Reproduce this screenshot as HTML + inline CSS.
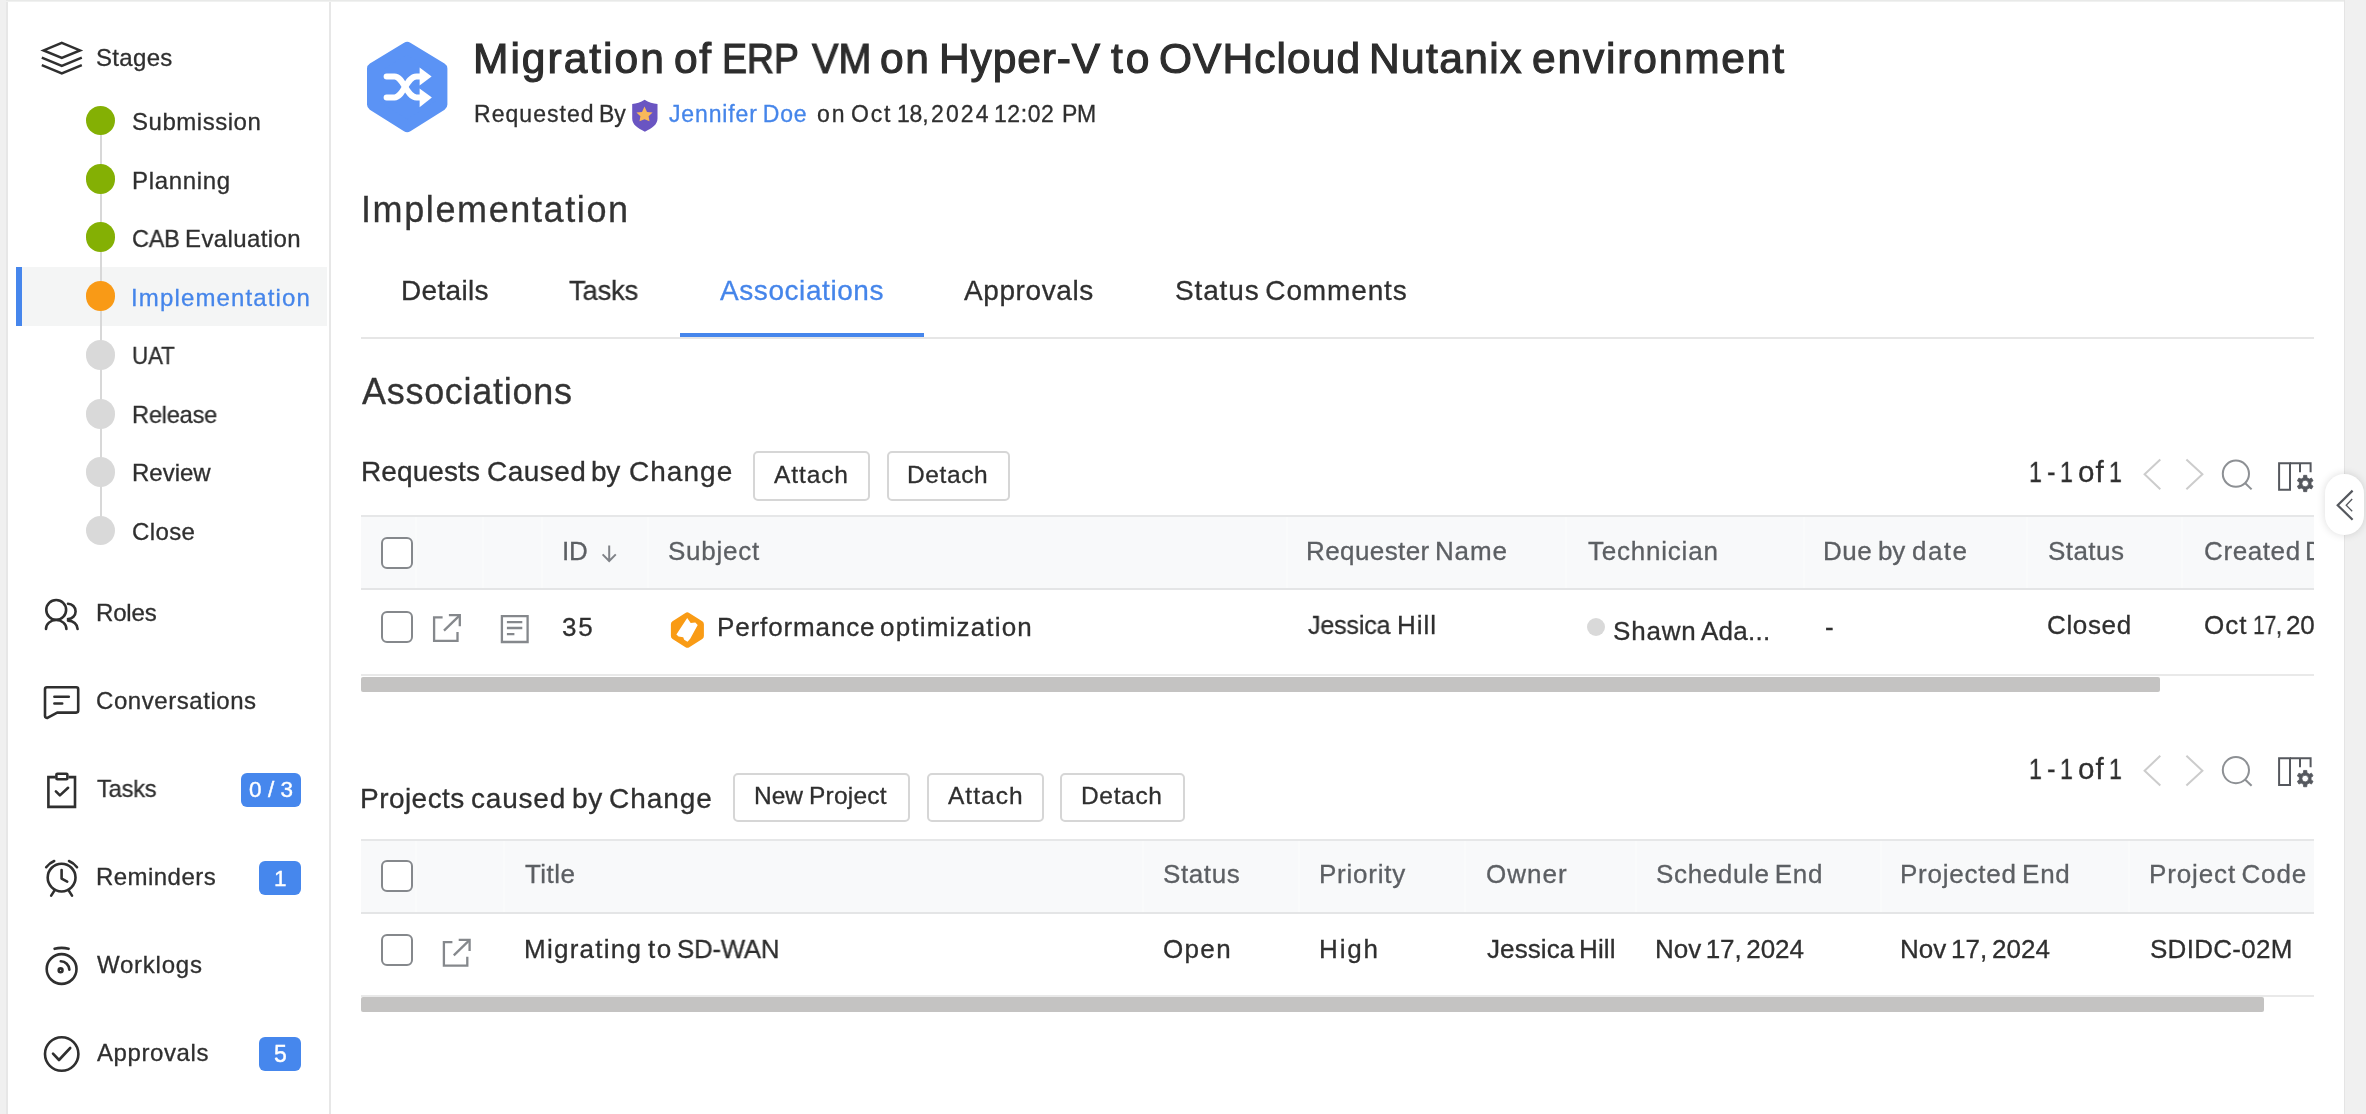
<!DOCTYPE html><html lang="en"><head><meta charset="utf-8"><title>Migration of ERP VM on Hyper-V to OVHcloud Nutanix environment</title>
<style>
*{box-sizing:border-box}
html,body{margin:0;padding:0}
body{width:2366px;height:1114px;position:relative;overflow:hidden;background:#fff;font-family:"Liberation Sans", Arial, Helvetica, sans-serif;color:#2f2f2f}
.t{position:absolute;white-space:pre;line-height:1;display:block;will-change:transform}
.abs,svg.i{position:absolute}
svg.i{overflow:visible;left:0;top:0}
#frame-l{left:0;top:0;width:6px;height:1114px;background:#f0f0f0}
#frame-lb{left:6px;top:0;width:2px;height:1114px;background:#e7e7e7}
#frame-t{left:6px;top:0;width:2338px;height:2px;background:linear-gradient(#e8e9e8 0,#e8e9e8 55%,#fafbfa 100%)}
#frame-r{left:2344px;top:0;width:22px;height:1114px;background:#f0f0f0;border-left:1px solid #e4e4e4}
#side-b{left:329px;top:2px;width:2px;height:1112px;background:#e7e7e7}
#stage-line{left:99.5px;top:120px;width:2px;height:412px;background:#d8d8d8}
#stage-sel{left:16px;top:267px;width:311px;height:59px;background:#f4f5f5;border-left:6px solid #4686ec}
.dot{position:absolute;width:29.8px;height:29.8px;border-radius:50%;left:85.7px}
.g{background:#84b004}.o{background:#f99a16}.n{background:#d9d9d9}
.badge{position:absolute;background:#4687ed;border-radius:6px}
.tabline{left:361px;top:337px;width:1953px;height:2px;background:#e6e6e6}
.tabsel{left:680px;top:333px;width:244px;height:4px;background:#4686ec}
.btn{position:absolute;border:2px solid #d6d6d6;border-radius:5px;background:#fff}
.th{position:absolute;left:361px;width:1953px;background:#f8f9fa;border-top:2px solid #e6e7e8;border-bottom:2px solid #e4e5e6}
.sep{position:absolute;width:2px;background:#fafbfb}
.rowline{position:absolute;left:361px;width:1953px;height:2px;background:#e9e9e9}
.sb{position:absolute;left:361px;height:15px;background:#c4c3c2;border-radius:2px}
.cb{position:absolute;left:381px;width:32px;height:32px;border:2px solid #85888c;border-radius:6px;background:#fff}
.clip{position:absolute;left:0;top:0;width:2314px;height:1114px;overflow:hidden}
.tdot{position:absolute;left:1586.9px;top:618px;width:18.1px;height:18.1px;border-radius:50%;background:#d9d9d9}
#pill{left:2325px;top:473.5px;width:39px;height:61px;border-radius:20px;background:#fff;box-shadow:0 0 8px rgba(0,0,0,.14)}
</style></head><body>
<div class="abs" id="frame-l"></div><div class="abs" id="frame-lb"></div><div class="abs" id="frame-t"></div>
<aside id="sidebar">
<div class="abs" id="side-b"></div>
<div class="abs" id="stage-sel"></div><div class="abs" id="stage-line"></div>
<svg class="i" width="340" height="1114" fill="none" stroke="#2f2f2f" stroke-width="2.6" stroke-linecap="round" stroke-linejoin="round">
<g id="ic-stages" stroke-linejoin="miter" stroke-linecap="butt" stroke-width="2.5"><path d="M61.8 42.9 L80 50.4 L61.8 57.9 L43.6 50.4 Z"/><path d="M41.8 57.7 L61.8 65.8 L81.8 57.7"/><path d="M41.8 65.2 L61.8 73.3 L81.8 65.2"/></g>
<g id="ic-roles"><circle cx="56.2" cy="609.9" r="9.9"/><path d="M46 629 A10.2 9 0 0 1 66.4 629"/><path d="M68 603.8 A7.6 7.6 0 0 1 68 619"/><path d="M68 620.6 A9.6 8.6 0 0 1 77.6 629"/></g>
<g id="ic-conv"><path d="M47 687.3 H76.2 a2 2 0 0 1 2 2 V710.6 a2 2 0 0 1 -2 2 H57.2 L47.9 717.6 a1.9 1.9 0 0 1 -2.9 -1.6 V689.3 a2 2 0 0 1 2 -2 Z"/><path d="M54.4 696.8 H68.8 M54.4 703.5 H62.2"/></g>
<g id="ic-tasks" stroke-linecap="butt" stroke-linejoin="miter"><path d="M55.2 777.1 H48.4 V806.9 H75 V777.1 H68.6"/><rect x="56.4" y="773.7" width="11" height="5.6" rx="1"/><path d="M55.9 791.4 L59.9 795.4 L68.1 787.8" stroke-linecap="round" stroke-linejoin="round"/></g>
<g id="ic-rem"><circle cx="61.6" cy="877.6" r="13.9"/><path d="M61.6 870 V878.6 L67.2 881.6"/><path d="M46.2 867.2 A19.5 19.5 0 0 1 54.2 861"/><path d="M69 861 A19.5 19.5 0 0 1 77 867.2"/><path d="M54.4 890.6 L51.2 895.6 M68.8 890.6 L72 895.6"/></g>
<g id="ic-work"><circle cx="61.6" cy="969" r="14.9"/><path d="M54.6 948.8 Q61.6 947 68.6 948.8"/><circle cx="60.6" cy="970.3" r="1.9"/><path d="M60.8 961.2 A9 9 0 0 1 69.4 969.6"/></g>
<g id="ic-appr"><circle cx="61.7" cy="1054" r="16.7"/><path d="M53 1053.6 L59 1060 L70.2 1048"/></g>
</svg>
<nav>
<span class="t" style="left:96.1px;top:46px;font-size:24px;letter-spacing:0.32px;-webkit-text-stroke:0.3px #2f2f2f;">Stages</span>
<ul style="list-style:none;margin:0;padding:0">
<li><i class="dot g" style="top:105.5px"></i><span class="t" style="left:131.6px;top:110px;font-size:24px;letter-spacing:0.533px;-webkit-text-stroke:0.3px #2f2f2f;">Submission</span></li>
<li><i class="dot g" style="top:164.3px"></i><span class="t" style="left:131.6px;top:169px;font-size:24px;letter-spacing:0.657px;-webkit-text-stroke:0.3px #2f2f2f;">Planning</span></li>
<li><i class="dot g" style="top:222.3px"></i><span class="t" style="left:131.73px;top:227px;font-size:24px;letter-spacing:-0.2px;-webkit-text-stroke:0.3px #2f2f2f;transform:scaleX(0.9748);transform-origin:0 0;">CAB</span> <span class="t" style="left:184.9px;top:227px;font-size:24px;letter-spacing:0.378px;-webkit-text-stroke:0.3px #2f2f2f;">Evaluation</span></li>
<li><i class="dot o" style="top:281.1px"></i><span class="t" style="left:130.6px;top:286px;font-size:24px;letter-spacing:1.138px;color:#4585ea;-webkit-text-stroke:0.3px #4585ea;">Implementation</span></li>
<li><i class="dot n" style="top:339.9px"></i><span class="t" style="left:131.67px;top:344px;font-size:24px;letter-spacing:-0.2px;-webkit-text-stroke:0.3px #2f2f2f;transform:scaleX(0.9305);transform-origin:0 0;">UAT</span></li>
<li><i class="dot n" style="top:398.9px"></i><span class="t" style="left:131.62px;top:403px;font-size:24px;letter-spacing:-0.2px;-webkit-text-stroke:0.3px #2f2f2f;transform:scaleX(0.9814);transform-origin:0 0;">Release</span></li>
<li><i class="dot n" style="top:456.9px"></i><span class="t" style="left:131.6px;top:461px;font-size:24px;-webkit-text-stroke:0.3px #2f2f2f;">Review</span></li>
<li><i class="dot n" style="top:515.6px"></i><span class="t" style="left:131.6px;top:520px;font-size:24px;letter-spacing:0.375px;-webkit-text-stroke:0.3px #2f2f2f;">Close</span></li>
</ul>
<span class="t" style="left:96.1px;top:601px;font-size:24px;letter-spacing:-0.175px;-webkit-text-stroke:0.3px #2f2f2f;">Roles</span><span class="t" style="left:96.1px;top:689px;font-size:24px;letter-spacing:0.558px;-webkit-text-stroke:0.3px #2f2f2f;">Conversations</span><span class="t" style="left:97.1px;top:777px;font-size:24px;letter-spacing:-0.2px;-webkit-text-stroke:0.3px #2f2f2f;transform:scaleX(0.985);transform-origin:0 0;">Tasks</span>
<b class="badge" style="left:240.5px;top:773.2px;width:60.6px;height:34.2px"></b><span class="t" style="left:248.9px;top:779px;font-size:22.5px;letter-spacing:0.075px;color:#fff;-webkit-text-stroke:0.4px #fff;">0 / 3</span>
<span class="t" style="left:96.1px;top:865px;font-size:24px;letter-spacing:0.45px;-webkit-text-stroke:0.3px #2f2f2f;">Reminders</span><b class="badge" style="left:259.3px;top:861.2px;width:41.9px;height:34px"></b><span class="t" style="left:273.6px;top:868px;font-size:22.5px;color:#fff;-webkit-text-stroke:0.4px #fff;">1</span>
<span class="t" style="left:97.1px;top:953px;font-size:24px;letter-spacing:0.757px;-webkit-text-stroke:0.3px #2f2f2f;">Worklogs</span>
<span class="t" style="left:97.1px;top:1041px;font-size:24px;letter-spacing:0.588px;-webkit-text-stroke:0.3px #2f2f2f;">Approvals</span><b class="badge" style="left:259.3px;top:1036.9px;width:41.9px;height:34.1px"></b><span class="t" style="left:274.0px;top:1043px;font-size:23px;color:#fff;-webkit-text-stroke:0.4px #fff;">5</span>
</nav></aside>
<main id="main">
<svg class="i" width="2366" height="160">
<path id="hex" fill="#5b93f5" stroke="#5b93f5" stroke-width="12" stroke-linejoin="round" d="M407.2 47.9 L441.4 68.6 V104.6 L407.2 126.2 L373 104.6 V68.6 Z"/>
<g id="shuffle" fill="none" stroke="#fff" stroke-width="6" stroke-linecap="round" stroke-linejoin="round"><path d="M386.6 76.4 H394.5 C403.5 76.4 406.5 97.4 416.5 97.4 H423"/><path d="M386.6 97.4 H394.5 C403.5 97.4 406.5 76.4 416.5 76.4 H423"/></g>
<g fill="#fff"><path d="M419.6 67.6 L431.6 76.4 L419.6 85.4 Z"/><path d="M419.6 88.6 L431.9 97.6 L419.6 107.2 Z"/></g>
<path id="shield" fill="#6a55c2" d="M644.6 99.7 C640.6 102.4 636.4 103.5 632.2 103.9 V118.6 C632.2 124.6 637.6 128.4 644.9 131.7 C652.2 128.4 657.5 124.6 657.5 118.6 V103.9 C653 103.5 648.6 102.4 644.6 99.7 Z"/>
<path id="star" fill="#f8b85a" d="M644.5 106.4 L647 111.9 L652.6 112.4 L648.6 116.2 L649.5 121.2 L644.5 119.2 L639.5 121.2 L640.4 116.2 L636.4 112.4 L642 111.9 Z"/>
</svg>
<h1 style="margin:0;font:inherit"><span class="t" style="left:472.9px;top:38px;font-size:42.5px;letter-spacing:2.0px;color:#2d2d2d;-webkit-text-stroke:1.1px #2d2d2d;">Migration</span> <span class="t" style="left:673.6px;top:38px;font-size:42.5px;letter-spacing:1.7px;color:#2d2d2d;-webkit-text-stroke:1.1px #2d2d2d;">of</span> <span class="t" style="left:722.35px;top:38px;font-size:42.5px;letter-spacing:-0.2px;color:#2d2d2d;-webkit-text-stroke:1.1px #2d2d2d;transform:scaleX(0.8826);transform-origin:0 0;">ERP</span> <span class="t" style="left:811.53px;top:38px;font-size:42.5px;letter-spacing:-0.2px;color:#2d2d2d;-webkit-text-stroke:1.1px #2d2d2d;transform:scaleX(0.9337);transform-origin:0 0;">VM</span> <span class="t" style="left:880.4px;top:38px;font-size:42.5px;letter-spacing:1.6px;color:#2d2d2d;-webkit-text-stroke:1.1px #2d2d2d;">on</span> <span class="t" style="left:938.9px;top:38px;font-size:42.5px;letter-spacing:0.867px;color:#2d2d2d;-webkit-text-stroke:1.1px #2d2d2d;">Hyper-V</span> <span class="t" style="left:1110.6px;top:38px;font-size:42.5px;letter-spacing:3.0px;color:#2d2d2d;-webkit-text-stroke:1.1px #2d2d2d;">to</span> <span class="t" style="left:1158.6px;top:38px;font-size:42.5px;letter-spacing:1.057px;color:#2d2d2d;-webkit-text-stroke:1.1px #2d2d2d;">OVHcloud</span> <span class="t" style="left:1369.0px;top:38px;font-size:42.5px;letter-spacing:1.383px;color:#2d2d2d;-webkit-text-stroke:1.1px #2d2d2d;">Nutanix</span> <span class="t" style="left:1532.2px;top:38px;font-size:42.5px;letter-spacing:1.82px;color:#2d2d2d;-webkit-text-stroke:1.1px #2d2d2d;">environment</span></h1>
<p style="margin:0"><span class="t" style="left:473.9px;top:103px;font-size:23px;letter-spacing:1.038px;-webkit-text-stroke:0.3px #2f2f2f;">Requested</span> <span class="t" style="left:599.12px;top:103px;font-size:23px;letter-spacing:-0.2px;-webkit-text-stroke:0.3px #2f2f2f;transform:scaleX(0.9845);transform-origin:0 0;">By</span> <span class="t" style="left:668.7px;top:103px;font-size:23px;letter-spacing:0.864px;word-spacing:-2.3px;color:#4585ea;-webkit-text-stroke:0.3px #4585ea;">Jennifer Doe</span> <span class="t" style="left:817.0px;top:103px;font-size:23px;letter-spacing:1.9px;-webkit-text-stroke:0.3px #2f2f2f;">on</span> <span class="t" style="left:850.8px;top:103px;font-size:23px;letter-spacing:1.8px;-webkit-text-stroke:0.3px #2f2f2f;">Oct</span> <span class="t" style="left:896.61px;top:103px;font-size:23px;letter-spacing:-0.2px;-webkit-text-stroke:0.3px #2f2f2f;transform:scaleX(0.986);transform-origin:0 0;">18,</span> <span class="t" style="left:931.3px;top:103px;font-size:23px;letter-spacing:2.133px;-webkit-text-stroke:0.3px #2f2f2f;">2024</span> <span class="t" style="left:994.2px;top:103px;font-size:23px;letter-spacing:0.575px;-webkit-text-stroke:0.3px #2f2f2f;">12:02</span> <span class="t" style="left:1061.7px;top:103px;font-size:23px;letter-spacing:-0.3px;-webkit-text-stroke:0.3px #2f2f2f;">PM</span></p>
<h2 style="margin:0;font:inherit"><span class="t" style="left:360.7px;top:192px;font-size:36px;letter-spacing:1.608px;color:#333;-webkit-text-stroke:0.3px #333;">Implementation</span></h2>
<div class="abs tabline"></div><div class="abs tabsel"></div>
<span class="t" style="left:401.0px;top:277px;font-size:28px;letter-spacing:0.333px;-webkit-text-stroke:0.3px #2f2f2f;">Details</span><span class="t" style="left:569.3px;top:277px;font-size:28px;letter-spacing:-0.2px;-webkit-text-stroke:0.3px #2f2f2f;transform:scaleX(0.9786);transform-origin:0 0;">Tasks</span><span class="t" style="left:719.9px;top:277px;font-size:28px;letter-spacing:0.573px;color:#4585ea;-webkit-text-stroke:0.3px #4585ea;">Associations</span><span class="t" style="left:964.2px;top:277px;font-size:28px;letter-spacing:0.588px;-webkit-text-stroke:0.3px #2f2f2f;">Approvals</span><span class="t" style="left:1174.5px;top:277px;font-size:28px;letter-spacing:0.857px;word-spacing:-2.8px;-webkit-text-stroke:0.3px #2f2f2f;">Status Comments</span>
<h2 style="margin:0;font:inherit"><span class="t" style="left:362.0px;top:374px;font-size:36px;letter-spacing:0.709px;color:#333;-webkit-text-stroke:0.3px #333;">Associations</span></h2>
<section id="requests">
<h3 style="margin:0;font:inherit"><span class="t" style="left:361.0px;top:458px;font-size:28px;letter-spacing:0.1px;-webkit-text-stroke:0.3px #2f2f2f;">Requests</span> <span class="t" style="left:486.7px;top:458px;font-size:28px;letter-spacing:0.48px;-webkit-text-stroke:0.3px #2f2f2f;">Caused</span> <span class="t" style="left:591.4px;top:458px;font-size:28px;letter-spacing:-0.3px;-webkit-text-stroke:0.3px #2f2f2f;">by</span> <span class="t" style="left:628.9px;top:458px;font-size:28px;letter-spacing:1.04px;-webkit-text-stroke:0.3px #2f2f2f;">Change</span></h3>
<div class="btn" style="left:752.5px;top:451px;width:117.5px;height:49.5px"></div><span class="t" style="left:774.3px;top:463px;font-size:24.5px;letter-spacing:0.9px;-webkit-text-stroke:0.3px #2f2f2f;">Attach</span>
<div class="btn" style="left:886.5px;top:451px;width:123px;height:49.5px"></div><span class="t" style="left:906.6px;top:463px;font-size:24.5px;letter-spacing:0.62px;-webkit-text-stroke:0.3px #2f2f2f;">Detach</span>
<span class="pg"><span class="t" style="left:2028.84px;top:457px;font-size:29.5px;-webkit-text-stroke:0.3px #2f2f2f;transform:scaleX(0.78);transform-origin:0 0;">1</span> <span class="t" style="left:2046.94px;top:457px;font-size:29.5px;-webkit-text-stroke:0.3px #2f2f2f;transform:scaleX(0.8625);transform-origin:0 0;">-</span> <span class="t" style="left:2059.94px;top:457px;font-size:29.5px;-webkit-text-stroke:0.3px #2f2f2f;transform:scaleX(0.78);transform-origin:0 0;">1</span> <span class="t" style="left:2077.8px;top:457px;font-size:29.5px;letter-spacing:1.1px;-webkit-text-stroke:0.3px #2f2f2f;">of</span> <span class="t" style="left:2109.24px;top:457px;font-size:29.5px;-webkit-text-stroke:0.3px #2f2f2f;transform:scaleX(0.78);transform-origin:0 0;">1</span></span>
<div class="th" style="top:515px;height:75px"></div>
<i class="sep" style="left:415px;top:517px;height:71px"></i>
<i class="sep" style="left:482px;top:517px;height:71px"></i>
<i class="sep" style="left:541px;top:517px;height:71px"></i>
<i class="sep" style="left:647px;top:517px;height:71px"></i>
<i class="sep" style="left:1286px;top:517px;height:71px"></i>
<i class="sep" style="left:1565px;top:517px;height:71px"></i>
<i class="sep" style="left:1803px;top:517px;height:71px"></i>
<i class="sep" style="left:2026px;top:517px;height:71px"></i>
<i class="sep" style="left:2181px;top:517px;height:71px"></i>
<div class="rowline" style="top:674px"></div><div class="sb" style="top:677px;width:1799px"></div>
<i class="cb" style="top:536.5px"></i><i class="cb" style="top:610.5px"></i>
<div class="clip">
<span class="t" style="left:561.6px;top:538px;font-size:26px;letter-spacing:-0.2px;color:#5c5f63;-webkit-text-stroke:0.3px #5c5f63;">ID</span><span class="t" style="left:668.0px;top:538px;font-size:26px;letter-spacing:0.75px;color:#5c5f63;-webkit-text-stroke:0.3px #5c5f63;">Subject</span><span class="t" style="left:1306.1px;top:538px;font-size:26px;letter-spacing:0.413px;color:#5c5f63;-webkit-text-stroke:0.3px #5c5f63;">Requester</span> <span class="t" style="left:1434.8px;top:538px;font-size:26px;letter-spacing:0.833px;color:#5c5f63;-webkit-text-stroke:0.3px #5c5f63;">Name</span><span class="t" style="left:1588.3px;top:538px;font-size:26px;letter-spacing:0.778px;color:#5c5f63;-webkit-text-stroke:0.3px #5c5f63;">Technician</span><span class="t" style="left:1823.0px;top:538px;font-size:26px;letter-spacing:0.55px;color:#5c5f63;-webkit-text-stroke:0.3px #5c5f63;">Due</span> <span class="t" style="left:1878.11px;top:538px;font-size:26px;letter-spacing:-0.2px;color:#5c5f63;-webkit-text-stroke:0.3px #5c5f63;transform:scaleX(0.9925);transform-origin:0 0;">by</span> <span class="t" style="left:1912.1px;top:538px;font-size:26px;letter-spacing:1.433px;color:#5c5f63;-webkit-text-stroke:0.3px #5c5f63;">date</span>
<span class="t" style="left:2047.5px;top:538px;font-size:26px;letter-spacing:0.44px;color:#5c5f63;-webkit-text-stroke:0.3px #5c5f63;">Status</span><span class="t" style="left:2203.5px;top:538px;font-size:26px;letter-spacing:0.6px;color:#5c5f63;-webkit-text-stroke:0.3px #5c5f63;">Created</span> <span class="t" style="left:2304.9px;top:538px;font-size:26px;letter-spacing:0.867px;color:#5c5f63;-webkit-text-stroke:0.3px #5c5f63;">Date</span>
<span class="t" style="left:562.4px;top:614px;font-size:26px;letter-spacing:1.7px;-webkit-text-stroke:0.3px #2f2f2f;">35</span><span class="t" style="left:717.3px;top:614px;font-size:26px;letter-spacing:0.87px;-webkit-text-stroke:0.3px #2f2f2f;">Performance</span> <span class="t" style="left:879.8px;top:614px;font-size:26px;letter-spacing:1.182px;-webkit-text-stroke:0.3px #2f2f2f;">optimization</span><span class="t" style="left:1307.8px;top:612px;font-size:26px;letter-spacing:-0.2px;-webkit-text-stroke:0.3px #2f2f2f;transform:scaleX(0.965);transform-origin:0 0;">Jessica</span> <span class="t" style="left:1397.1px;top:612px;font-size:26px;letter-spacing:0.933px;-webkit-text-stroke:0.3px #2f2f2f;">Hill</span><i class="tdot"></i><span class="t" style="left:1612.8px;top:618px;font-size:26px;letter-spacing:0.825px;-webkit-text-stroke:0.3px #2f2f2f;">Shawn</span> <span class="t" style="left:1700.9px;top:618px;font-size:26px;letter-spacing:0.24px;-webkit-text-stroke:0.3px #2f2f2f;">Ada...</span><span class="t" style="left:1824.5px;top:614px;font-size:26px;-webkit-text-stroke:0.3px #2f2f2f;">-</span><span class="t" style="left:2046.7px;top:612px;font-size:26px;letter-spacing:0.64px;-webkit-text-stroke:0.3px #2f2f2f;">Closed</span><span class="t" style="left:2203.5px;top:612px;font-size:26px;letter-spacing:1.05px;-webkit-text-stroke:0.3px #2f2f2f;">Oct</span> <span class="t" style="left:2253.29px;top:612px;font-size:26px;letter-spacing:-0.2px;-webkit-text-stroke:0.3px #2f2f2f;transform:scaleX(0.8098);transform-origin:0 0;">17,</span> <span class="t" style="left:2285.8px;top:612px;font-size:26px;letter-spacing:-0.1px;-webkit-text-stroke:0.3px #2f2f2f;">2024</span>
</div>
</section>
<section id="projects">
<h3 style="margin:0;font:inherit"><span class="t" style="left:360.2px;top:785px;font-size:28px;letter-spacing:0.457px;-webkit-text-stroke:0.3px #2f2f2f;">Projects</span> <span class="t" style="left:471.4px;top:785px;font-size:28px;letter-spacing:0.8px;-webkit-text-stroke:0.3px #2f2f2f;">caused</span> <span class="t" style="left:571.8px;top:785px;font-size:28px;letter-spacing:0.7px;-webkit-text-stroke:0.3px #2f2f2f;">by</span> <span class="t" style="left:609.1px;top:785px;font-size:28px;letter-spacing:0.96px;-webkit-text-stroke:0.3px #2f2f2f;">Change</span></h3>
<div class="btn" style="left:732.5px;top:772.5px;width:177.5px;height:49.5px"></div><span class="t" style="left:753.6px;top:784px;font-size:24.5px;letter-spacing:-0.05px;-webkit-text-stroke:0.3px #2f2f2f;">New</span> <span class="t" style="left:808.8px;top:784px;font-size:24.5px;letter-spacing:0.217px;-webkit-text-stroke:0.3px #2f2f2f;">Project</span>
<div class="btn" style="left:926.5px;top:772.5px;width:117.5px;height:49.5px"></div><span class="t" style="left:947.8px;top:784px;font-size:24.5px;letter-spacing:1.02px;-webkit-text-stroke:0.3px #2f2f2f;">Attach</span>
<div class="btn" style="left:1060px;top:772.5px;width:124.5px;height:49.5px"></div><span class="t" style="left:1080.5px;top:784px;font-size:24.5px;letter-spacing:0.66px;-webkit-text-stroke:0.3px #2f2f2f;">Detach</span>
<span class="pg"><span class="t" style="left:2028.84px;top:754px;font-size:29.5px;-webkit-text-stroke:0.3px #2f2f2f;transform:scaleX(0.78);transform-origin:0 0;">1</span> <span class="t" style="left:2046.94px;top:754px;font-size:29.5px;-webkit-text-stroke:0.3px #2f2f2f;transform:scaleX(0.8625);transform-origin:0 0;">-</span> <span class="t" style="left:2059.94px;top:754px;font-size:29.5px;-webkit-text-stroke:0.3px #2f2f2f;transform:scaleX(0.78);transform-origin:0 0;">1</span> <span class="t" style="left:2077.8px;top:754px;font-size:29.5px;letter-spacing:1.1px;-webkit-text-stroke:0.3px #2f2f2f;">of</span> <span class="t" style="left:2109.24px;top:754px;font-size:29.5px;-webkit-text-stroke:0.3px #2f2f2f;transform:scaleX(0.78);transform-origin:0 0;">1</span></span>
<div class="th" style="top:838.5px;height:75.5px"></div>
<i class="sep" style="left:415px;top:840.5px;height:71.5px"></i>
<i class="sep" style="left:503px;top:840.5px;height:71.5px"></i>
<i class="sep" style="left:1142px;top:840.5px;height:71.5px"></i>
<i class="sep" style="left:1298px;top:840.5px;height:71.5px"></i>
<i class="sep" style="left:1464px;top:840.5px;height:71.5px"></i>
<i class="sep" style="left:1635px;top:840.5px;height:71.5px"></i>
<i class="sep" style="left:1880px;top:840.5px;height:71.5px"></i>
<i class="sep" style="left:2128px;top:840.5px;height:71.5px"></i>
<div class="rowline" style="top:994.5px"></div><div class="sb" style="top:996.7px;width:1903px"></div>
<i class="cb" style="top:860px"></i><i class="cb" style="top:934px"></i>
<span class="t" style="left:525.0px;top:861px;font-size:26px;letter-spacing:0.425px;color:#5c5f63;-webkit-text-stroke:0.3px #5c5f63;">Title</span>
<span class="t" style="left:1318.6px;top:861px;font-size:26px;letter-spacing:0.757px;color:#5c5f63;-webkit-text-stroke:0.3px #5c5f63;">Priority</span>
<span class="t" style="left:1485.8px;top:861px;font-size:26px;letter-spacing:1.025px;color:#5c5f63;-webkit-text-stroke:0.3px #5c5f63;">Owner</span>
<span class="t" style="left:1655.6px;top:861px;font-size:26px;letter-spacing:0.645px;word-spacing:-2.6px;color:#5c5f63;-webkit-text-stroke:0.3px #5c5f63;">Schedule End</span>
<span class="t" style="left:1900.4px;top:861px;font-size:26px;letter-spacing:0.758px;word-spacing:-2.6px;color:#5c5f63;-webkit-text-stroke:0.3px #5c5f63;">Projected End</span>
<span class="t" style="left:2149.0px;top:861px;font-size:26px;letter-spacing:0.864px;word-spacing:-2.6px;color:#5c5f63;-webkit-text-stroke:0.3px #5c5f63;">Project Code</span>
<span class="t" style="left:1163.0px;top:861px;font-size:26px;letter-spacing:0.6px;color:#5c5f63;-webkit-text-stroke:0.3px #5c5f63;">Status</span>
<span class="t" style="left:523.6px;top:936px;font-size:26px;letter-spacing:1.25px;-webkit-text-stroke:0.3px #2f2f2f;">Migrating</span> <span class="t" style="left:647.7px;top:936px;font-size:26px;letter-spacing:1.5px;-webkit-text-stroke:0.3px #2f2f2f;">to</span> <span class="t" style="left:676.81px;top:936px;font-size:26px;letter-spacing:-0.2px;-webkit-text-stroke:0.3px #2f2f2f;transform:scaleX(0.9901);transform-origin:0 0;">SD-WAN</span><span class="t" style="left:1163.0px;top:936px;font-size:26px;letter-spacing:1.333px;-webkit-text-stroke:0.3px #2f2f2f;">Open</span><span class="t" style="left:1318.8px;top:936px;font-size:26px;letter-spacing:1.867px;-webkit-text-stroke:0.3px #2f2f2f;">High</span><span class="t" style="left:1486.6px;top:936px;font-size:26px;letter-spacing:0.1px;word-spacing:-2.6px;-webkit-text-stroke:0.3px #2f2f2f;">Jessica Hill</span><span class="t" style="left:1654.8px;top:936px;font-size:26px;letter-spacing:-0.045px;word-spacing:-2.6px;-webkit-text-stroke:0.3px #2f2f2f;">Nov 17, 2024</span><span class="t" style="left:1900.4px;top:936px;font-size:26px;letter-spacing:0.036px;word-spacing:-2.6px;-webkit-text-stroke:0.3px #2f2f2f;">Nov 17, 2024</span><span class="t" style="left:2150.0px;top:936px;font-size:26px;letter-spacing:0.275px;-webkit-text-stroke:0.3px #2f2f2f;">SDIDC-02M</span>
</section>
<svg class="i" width="2366" height="1114">
<path fill="none" stroke="#808388" stroke-width="2" d="M609.2 545.6 V560.6 M602.6 554.4 L609.2 561 L615.8 554.4"/>
<g transform="translate(0 0)" fill="none" stroke="#85888c" stroke-width="2.3"><path d="M442.6 617.4 H434.1 V640.8 H457.5 V632"/><path d="M444 630.6 L459.4 615.6"/><path d="M448.9 615.1 H459.8 V626.2"/></g><g transform="translate(9.8 324.8)" fill="none" stroke="#85888c" stroke-width="2.3"><path d="M442.6 617.4 H434.1 V640.8 H457.5 V632"/><path d="M444 630.6 L459.4 615.6"/><path d="M448.9 615.1 H459.8 V626.2"/></g>
<g fill="none" stroke="#85888c" stroke-width="2.3"><path d="M501.9 616.2 H527.6 V642 H501.9 Z"/><path d="M506.9 622.1 H522.3 M506.9 628 H522.3 M506.9 634.1 H514.4"/></g>
<path fill="#f99b15" stroke="#f99b15" stroke-width="7" stroke-linejoin="round" d="M687.3 615.9 L700.4 624.2 V636 L687.4 644.3 L674.4 636 V624.2 Z"/>
<path fill="#fff" d="M687.2 618 L690.7 622.9 L695.3 622.5 L697.7 625 L690.2 638.8 L687.5 641.7 L684.2 639.8 L683.2 637.2 L678.6 636.6 L676.4 634.5 Z"/>
<g transform="translate(0 0)" fill="none" stroke-width="2"><path stroke="#cccccc" d="M2160.3 459.4 L2144.6 474.3 L2160.3 489.2"/><path stroke="#cccccc" d="M2186.4 459.4 L2202.4 474.3 L2186.4 489.2"/><g stroke="#8d9094"><circle cx="2235.9" cy="473.7" r="13.1"/><path d="M2245.3 483.3 L2251.6 489.4"/></g><g transform="translate(0 0)"><g stroke="#55585e"><path d="M2279.1 463.2 H2290 V489.8 H2279.1 Z"/><path d="M2290 463.2 H2310.6 V472.2 M2300 463.2 V472.2"/></g><path fill="#55585e" stroke="#55585e" stroke-width="0.8" stroke-linejoin="round" fill-rule="evenodd" d="M2303.45 477.76 L2303.62 475.35 L2306.78 475.35 L2306.95 477.76 L2309.29 479.11 L2311.46 478.05 L2313.05 480.80 L2311.05 482.15 L2311.05 484.85 L2313.05 486.20 L2311.46 488.95 L2309.29 487.89 L2306.95 489.24 L2306.78 491.65 L2303.62 491.65 L2303.45 489.24 L2301.11 487.89 L2298.94 488.95 L2297.35 486.20 L2299.35 484.85 L2299.35 482.15 L2297.35 480.80 L2298.94 478.05 L2301.11 479.11 Z M2308.50 483.50 A3.3 3.3 0 1 0 2301.90 483.50 A3.3 3.3 0 1 0 2308.50 483.50 Z"/></g></g><g transform="translate(0 296.4)" fill="none" stroke-width="2"><path stroke="#cccccc" d="M2160.3 459.4 L2144.6 474.3 L2160.3 489.2"/><path stroke="#cccccc" d="M2186.4 459.4 L2202.4 474.3 L2186.4 489.2"/><g stroke="#8d9094"><circle cx="2235.9" cy="473.7" r="13.1"/><path d="M2245.3 483.3 L2251.6 489.4"/></g><g transform="translate(0 -1.3)"><g stroke="#55585e"><path d="M2279.1 463.2 H2290 V489.8 H2279.1 Z"/><path d="M2290 463.2 H2310.6 V472.2 M2300 463.2 V472.2"/></g><path fill="#55585e" stroke="#55585e" stroke-width="0.8" stroke-linejoin="round" fill-rule="evenodd" d="M2303.45 477.76 L2303.62 475.35 L2306.78 475.35 L2306.95 477.76 L2309.29 479.11 L2311.46 478.05 L2313.05 480.80 L2311.05 482.15 L2311.05 484.85 L2313.05 486.20 L2311.46 488.95 L2309.29 487.89 L2306.95 489.24 L2306.78 491.65 L2303.62 491.65 L2303.45 489.24 L2301.11 487.89 L2298.94 488.95 L2297.35 486.20 L2299.35 484.85 L2299.35 482.15 L2297.35 480.80 L2298.94 478.05 L2301.11 479.11 Z M2308.50 483.50 A3.3 3.3 0 1 0 2301.90 483.50 A3.3 3.3 0 1 0 2308.50 483.50 Z"/></g></g>
</svg>
</main>
<div class="abs" id="frame-r"></div><div class="abs" id="pill"></div>
<svg class="i" width="2366" height="1114" fill="none" stroke="#55585e"><path stroke-width="2.2" d="M2352.6 490.6 L2337.7 505.2 L2352.6 519.8"/><path stroke-width="1.3" d="M2352.2 499 L2346.2 505.2 L2352.2 511.2"/></svg>
</body></html>
